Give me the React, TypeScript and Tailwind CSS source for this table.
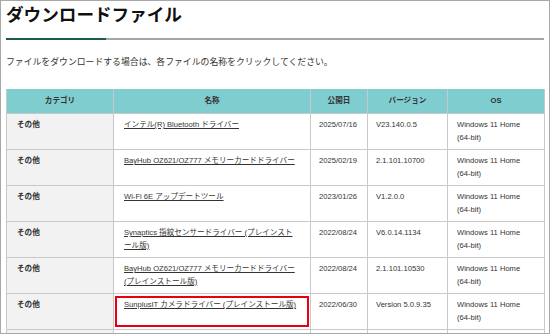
import React from "react";

type Row = { name: string; date: string; ver: string };

const rows: Row[] = [
  { name: "インテル(R) Bluetooth ドライバー", date: "2025/07/16", ver: "V23.140.0.5" },
  { name: "BayHub OZ621/OZ777 メモリーカードドライバー", date: "2025/02/19", ver: "2.1.101.10700" },
  { name: "Wi-Fi 6E アップデートツール", date: "2023/01/26", ver: "V1.2.0.0" },
  { name: "Synaptics 指紋センサードライバー (プレインストール版)", date: "2022/08/24", ver: "V6.0.14.1134" },
  { name: "BayHub OZ621/OZ777 メモリーカードドライバー (プレインストール版)", date: "2022/08/24", ver: "2.1.101.10530" },
  { name: "SunplusIT カメラドライバー (プレインストール版)", date: "2022/06/30", ver: "Version 5.0.9.35" },
];

const font = { fontFamily: '"Liberation Sans", "Noto Sans CJK JP", sans-serif' };

export default function App() {
  return (
    <div
      className="w-[550px] h-[334px] overflow-hidden bg-white border border-[#a8a8a8] px-[5px] text-[#333]"
      style={font}
    >
      <h1 className="pt-[2px] text-[17.6px] leading-[24px] font-bold text-[#111]">ダウンロードファイル</h1>
      <div className="mt-[11px] flex h-[2px]">
        <div className="w-[100px] bg-[#1d5b4b]" />
        <div className="flex-1 bg-[#a6a6a6]" />
      </div>
      <p className="mt-[16px] text-[8.85px] leading-[12px]">
        ファイルをダウンロードする場合は、各ファイルの名称をクリックしてください。
      </p>
      <table className="mt-[21px] w-[538px] table-fixed border-collapse text-[7.6px] leading-[12.7px]">
        <colgroup>
          <col className="w-[107px]" />
          <col className="w-[197px]" />
          <col className="w-[57px]" />
          <col className="w-[80px]" />
          <col className="w-[97px]" />
        </colgroup>
        <thead>
          <tr className="h-[24px] bg-[#80cdd0]">
            {["カテゴリ", "名称", "公開日", "バージョン", "OS"].map((h) => (
              <th key={h} className="border border-[#c9c9c9] border-t-[#80cdd0] text-center font-bold align-middle">
                {h}
              </th>
            ))}
          </tr>
        </thead>
        <tbody>
          {rows.map((r, i) => (
            <tr key={i} className="h-[36px]">
              <td className="border border-[#c9c9c9] bg-[#f2f2f2] align-top pt-[5px] pl-[10px] font-bold">その他</td>
              <td className="relative border border-[#c9c9c9] align-top pt-[5px] pl-[10px] pr-[10px]">
                <a href="#" className="underline">{r.name}</a>
                {i === 5 && (
                  <div className="absolute top-[2px] bottom-[2px] left-[1px] right-[1px] border-2 border-[#e60012]" />
                )}
              </td>
              <td className="border border-[#c9c9c9] align-top pt-[5px] pl-[8px]">{r.date}</td>
              <td className="border border-[#c9c9c9] align-top pt-[5px] pl-[8px]">{r.ver}</td>
              <td className="border border-[#c9c9c9] align-top pt-[5px] pl-[9px]">
                Windows 11 Home
                <br />
                (64-bit)
              </td>
            </tr>
          ))}
          <tr className="h-[36px]">
            <td className="border border-[#c9c9c9] bg-[#f2f2f2]" />
            <td className="border border-[#c9c9c9]" />
            <td className="border border-[#c9c9c9]" />
            <td className="border border-[#c9c9c9]" />
            <td className="border border-[#c9c9c9]" />
          </tr>
        </tbody>
      </table>
    </div>
  );
}
